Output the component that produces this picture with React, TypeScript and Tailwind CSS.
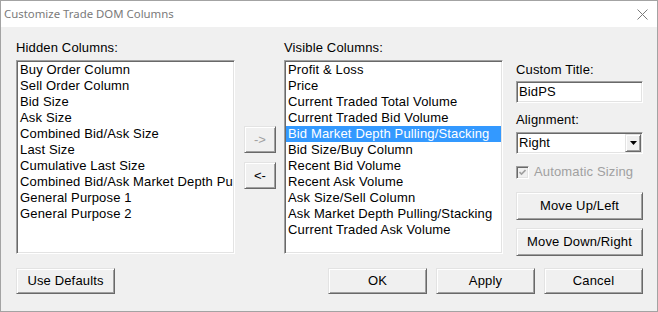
const hidden = [
  "Buy Order Column",
  "Sell Order Column",
  "Bid Size",
  "Ask Size",
  "Combined Bid/Ask Size",
  "Last Size",
  "Cumulative Last Size",
  "Combined Bid/Ask Market Depth Pulling/Stacking",
  "General Purpose 1",
  "General Purpose 2",
];

const visible = [
  "Profit & Loss",
  "Price",
  "Current Traded Total Volume",
  "Current Traded Bid Volume",
  "Bid Market Depth Pulling/Stacking",
  "Bid Size/Buy Column",
  "Recent Bid Volume",
  "Recent Ask Volume",
  "Ask Size/Sell Column",
  "Ask Market Depth Pulling/Stacking",
  "Current Traded Ask Volume",
];

const raised =
  "border border-t-[#e3e3e3] border-l-[#e3e3e3] border-r-[#696969] border-b-[#696969] bg-[#f0f0f0] shadow-[inset_1px_1px_0_#ffffff,inset_-1px_-1px_0_#a0a0a0]";
const sunken =
  "border border-t-[#a0a0a0] border-l-[#a0a0a0] border-r-white border-b-white bg-white shadow-[inset_1px_1px_0_#696969,inset_-1px_-1px_0_#e3e3e3]";

function Button({ label, className = "", disabled = false }: { label: string; className?: string; disabled?: boolean }) {
  return (
    <div className={`${raised} flex items-center justify-center ${disabled ? "text-[#a0a0a0]" : "text-black"} ${className}`}>
      {label}
    </div>
  );
}

function ListBox({ items, selected }: { items: string[]; selected?: number }) {
  return (
    <div className={`${sunken} h-[194px] w-[219px] overflow-hidden p-px`}>
      {items.map((item, i) => (
        <div
          key={item}
          className={`h-4 overflow-hidden whitespace-nowrap pl-[2px] leading-4 ${i === selected ? "bg-[#3399ff] text-white" : "text-black"}`}
        >
          {item}
        </div>
      ))}
    </div>
  );
}

export default function App() {
  return (
    <div className="flex h-[312px] w-[658px] flex-col border border-[#a3a3a3] bg-[#f0f0f0] font-['Liberation_Sans',Arial,sans-serif] text-[13px] tracking-[0.15px] text-black">
      {/* title bar */}
      <div className="flex h-[26px] shrink-0 items-center justify-between bg-white pl-[3px] pr-[9px]">
        <span className="font-['Noto_Sans',sans-serif] text-[11.4px] tracking-normal text-[#7a7a7a]">Customize Trade DOM Columns</span>
        <svg width="11" height="11" viewBox="0 0 11 11">
          <path d="M0.5 0.5L10.5 10.5M10.5 0.5L0.5 10.5" stroke="#7a7a7a" strokeWidth="1" />
        </svg>
      </div>

      <div className="flex flex-col pl-[15px] pr-[14px] pt-[13px]">
        <div className="flex">
          <div className="flex w-[219px] flex-col">
            <div className="h-4 leading-4">Hidden Columns:</div>
            <div className="mt-1">
              <ListBox items={hidden} />
            </div>
          </div>

          <div className="ml-[9px] mt-[86px] flex w-[32px] flex-col gap-[9px]">
            <Button label="->" disabled className="h-[27px]" />
            <Button label="<-" className="h-[27px]" />
          </div>

          <div className="ml-[8px] flex w-[219px] flex-col">
            <div className="h-4 leading-4">Visible Columns:</div>
            <div className="mt-1">
              <ListBox items={visible} selected={4} />
            </div>
          </div>

          <div className="ml-[13px] flex w-[127px] flex-col">
            <div className="mt-[22px] h-4 leading-4">Custom Title:</div>
            <div className={`${sunken} mt-[3px] flex h-[22px] items-center pl-[2px]`}>BidPS</div>
            <div className="mt-[9px] h-4 leading-4">Alignment:</div>
            <div className={`${sunken} mt-[4px] flex h-[22px] items-center justify-between p-px pl-[2px]`}>
              <span>Right</span>
              <div className={`${raised} flex h-full w-[16px] items-center justify-center`}>
                <svg width="7" height="4" viewBox="0 0 7 4">
                  <path d="M0 0H7L3.5 4Z" fill="#000" />
                </svg>
              </div>
            </div>
            <div className="mt-[10px] flex h-4 items-center gap-[5px] text-[#a0a0a0]">
              <div className="flex h-[13px] w-[13px] items-center justify-center border border-t-[#a0a0a0] border-l-[#a0a0a0] border-r-white border-b-white bg-[#f0f0f0] shadow-[inset_1px_1px_0_#696969,inset_-1px_-1px_0_#e3e3e3]">
                <svg width="7" height="7" viewBox="0 0 7 7">
                  <path d="M0.5 3L2.5 5L6.5 1" stroke="#a0a0a0" strokeWidth="1.6" fill="none" />
                </svg>
              </div>
              <span>Automatic Sizing</span>
            </div>
            <Button label="Move Up/Left" className="mt-[12px] h-[28px]" />
            <Button label="Move Down/Right" className="mt-[8px] h-[28px]" />
          </div>
        </div>

        <div className="mt-[12px] flex justify-between">
          <Button label="Use Defaults" className="h-[26px] w-[99px]" />
          <div className="flex gap-[9px]">
            <Button label="OK" className="h-[26px] w-[99px]" />
            <Button label="Apply" className="h-[26px] w-[99px]" />
            <Button label="Cancel" className="h-[26px] w-[99px]" />
          </div>
        </div>
      </div>
    </div>
  );
}
